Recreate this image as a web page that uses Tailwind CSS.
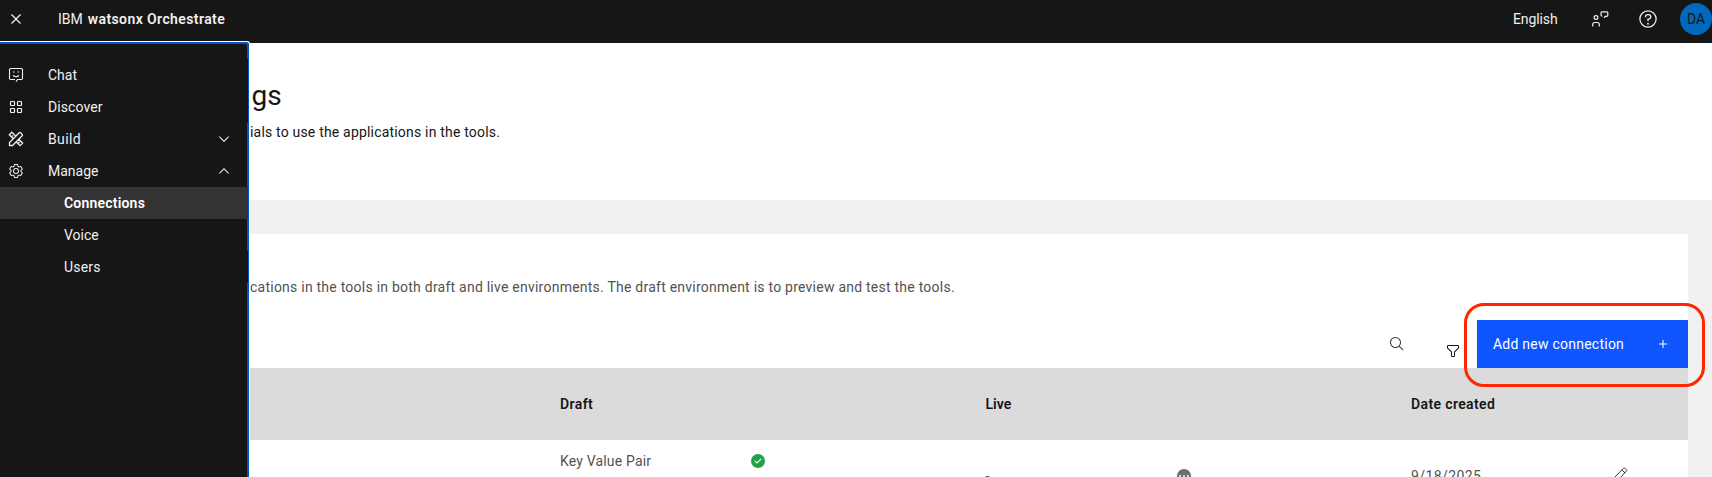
<!DOCTYPE html>
<html lang="en">
<head>
<meta charset="utf-8">
<title>IBM watsonx Orchestrate</title>
<script src="https://cdn.jsdelivr.net/npm/@tailwindcss/browser@4"></script>
</head>
<body class="relative h-[477px] w-[1712px] overflow-hidden bg-white font-['Roboto','Liberation_Sans',sans-serif] text-sm text-[#161616]">
<header class="flex h-[43px] items-center bg-[#161616] pb-[5px] text-[#f0f0f0]">
  <svg class="ml-[6px] size-5" viewBox="0 0 32 32" fill="currentColor"><path d="M17.4141 16 24 9.4141 22.5859 8 16 14.5859 9.4143 8 8 9.4141 14.5859 16 8 22.5859 9.4143 24 16 17.4141 22.5859 24 24 22.5859z"/></svg>
  <div class="ml-8 flex gap-[5px] whitespace-nowrap"><span>IBM</span><b class="font-semibold tracking-[0.4px]">watsonx Orchestrate</b></div>
  <div class="ml-auto flex items-center">
    <span class="w-[44px] tracking-[-0.1px] whitespace-nowrap">English</span>
    <svg class="ml-[33px] size-5" viewBox="0 0 20 20" fill="none" stroke="currentColor" stroke-width="1.2"><circle cx="6" cy="8.500" r="1.900"/><path d="M2.700 17.500v-2a2 2 0 0 1 2-2h2.600a2 2 0 0 1 2 2v2M12.200 7.500 11 6V3.900q0-1 1-1h4.800q1 0 1 1v2.400q0 1-1 1h-1.600L14 9"/></svg>
    <svg class="ml-[28px] size-5" viewBox="0 0 32 32" fill="currentColor"><path d="M16 2a14 14 0 1 0 14 14A14 14 0 0 0 16 2Zm0 26a12 12 0 1 1 12-12 12 12 0 0 1-12 12Z"/><circle cx="16" cy="23.500" r="1.500"/><path d="M17 8h-1.500A4.490 4.490 0 0 0 11 12.500V13h2v-.5A2.500 2.500 0 0 1 15.500 10H17a2.500 2.500 0 0 1 0 5h-2v4.500h2V17a4.500 4.500 0 0 0 0-9Z"/></svg>
    <div class="ml-[22px] flex size-8 items-center justify-center rounded-full bg-[#0068bd] text-[#161616]">DA</div>
  </div>
</header>

<main class="bg-[#f1f1f1]">
  <section class="h-[157px] bg-white pl-[236px]">
    <h1 class="pt-[35px] text-[28px] leading-9">ngs</h1>
    <p class="pt-[9px] pl-[14px] leading-[18px] tracking-[0.19px]">ials to use the applications in the tools.</p>
  </section>
  <section class="mt-[34px] mr-6 h-[243px] bg-white">
    <p class="h-[86px] pt-[44px] pl-[250px] leading-[18px] tracking-[0.237px] text-[#525252]">cations in the tools in both draft and live environments. The draft environment is to preview and test the tools.</p>
    <div class="flex h-12 items-center justify-end">
      <svg class="size-4" viewBox="0 0 32 32" fill="#393939"><path d="M29 27.586l-7.552-7.552a11.018 11.018 0 1 0-1.414 1.414L27.586 29ZM4 13a9 9 0 1 1 9 9 9.010 9.010 0 0 1-9-9Z"/></svg>
      <svg class="mt-[14px] mr-4 ml-[40px] size-4" viewBox="0 0 32 32" fill="#161616"><path d="M18 28h-4a2 2 0 0 1-2-2v-7.590L4.590 11A2 2 0 0 1 4 9.590V6a2 2 0 0 1 2-2h20a2 2 0 0 1 2 2v3.590a2 2 0 0 1-.59 1.410L20 18.410V26a2 2 0 0 1-2 2ZM6 6v3.590l8 8V26h4v-8.410l8-8V6Z"/></svg>
      <button class="flex h-12 w-[211px] items-center justify-between bg-[#0f56ff] pr-[17px] pl-4 tracking-[0.24px] whitespace-nowrap text-white"><span>Add new connection</span><svg class="size-4" viewBox="0 0 32 32" fill="currentColor"><path d="M17 15V8h-2v7H8v2h7v7h2v-7h7v-2z"/></svg></button>
    </div>
    <div class="ml-[250px] grid h-[72px] grid-cols-[310px_425.500px_425.500px_277px] items-center bg-[#dbdbdb] font-semibold"><i></i><span class="tracking-[0.4px]">Draft</span><span>Live</span><span class="tracking-[0.37px]">Date created</span></div>
    <div class="ml-[250px] grid grid-cols-[310px_425.500px_425.500px_277px] text-[#525252]">
      <i></i>
      <div class="flex gap-[100px] pt-[11px]"><span class="w-[90px] leading-5 tracking-[0.17px] whitespace-nowrap">Key Value Pair</span><svg class="mt-[2px] size-4" viewBox="0 0 32 32"><circle cx="16" cy="16" r="14" fill="#24a148"/><path fill="#fff" d="M14 21.590l-5-5L10.590 15 14 18.409 21.410 11l1.596 1.586Z"/></svg></div>
      <div class="flex gap-[185px] pt-[26px]"><span class="w-[5px]">-</span><svg class="mt-[2px] size-4" viewBox="0 0 32 32"><circle cx="16" cy="16" r="14" fill="#6f6f6f"/><g fill="#fff"><circle cx="8" cy="16" r="2"/><circle cx="16" cy="16" r="2"/><circle cx="24" cy="16" r="2"/></g></svg></div>
      <div class="flex gap-[133px] pt-[26px]"><span class="w-[69px] tracking-[0.4px]">9/18/2025</span><svg class="size-4" viewBox="0 0 16 16" fill="none" stroke="#393939"><path d="M1.500 14.500V11.500L10.500 2.200a1 1 0 0 1 1.400 0l1.500 1.500a1 1 0 0 1 0 1.400L4.500 14.500ZM9 4l3 3"/></svg></div>
    </div>
  </section>
</main>

<nav class="absolute top-[41px] left-0 h-[440px] w-[250px] rounded-tr-[3px] border-t border-r border-white bg-[#0353c8] pt-[2px] text-[#f0f0f0]">
  <div class="h-full w-[247px] rounded-tr-[2px] bg-[#161616] pt-[15px]">
    <div class="flex h-8 w-[248px] items-center bg-[#161616] pl-2"><svg class="mr-6 size-4" viewBox="0 0 16 16" fill="none" stroke="currentColor" stroke-width="1.100"><path d="M8 14.700l1.400-2.200H13.300a1.200 1.200 0 0 0 1.200-1.200V2.700A1.200 1.200 0 0 0 13.300 1.500H2.700A1.200 1.200 0 0 0 1.500 2.700v8.600a1.200 1.200 0 0 0 1.200 1.200H7M5 5h1.500M9.500 5H11M5 8.500q3 2.600 6 0"/></svg>Chat</div>
    <div class="flex h-8 w-[248px] items-center bg-[#161616] pl-2"><svg class="mr-6 size-4" viewBox="0 0 16 16" fill="none" stroke="currentColor" stroke-width="1.200"><rect x="2.500" y="2.500" width="4" height="4" rx=".7"/><rect x="9.500" y="2.500" width="4" height="4" rx=".7"/><rect x="2.500" y="9.500" width="4" height="4" rx=".7"/><rect x="9.500" y="9.500" width="4" height="4" rx=".7"/></svg><span class="tracking-[0.1px]">Discover</span></div>
    <div class="flex h-8 items-center pl-2"><svg class="mr-6 size-4" viewBox="0 0 16 16" fill="none" stroke="currentColor" stroke-width="1.300"><path d="M5.500 8 1.300 3.800 3.900 1.200 8 5.400M10.300 7.800l4.300 4.300-2.600 2.600L7.800 10.500M3.600 5.800 5 4.400M10.300 12.200l1.400-1.400M1.500 14.500V11.500L11.200 1.800a1 1 0 0 1 1.400 0L14.200 3.400a1 1 0 0 1 0 1.400L4.500 14.500Z"/></svg><span class="tracking-[0.4px]">Build</span><svg class="mr-[15px] ml-auto size-4" viewBox="0 0 16 16" fill="currentColor"><path d="M8 11 3 6l.7-.7L8 9.600l4.300-4.300.7.7z"/></svg></div>
    <div class="flex h-8 items-center pl-2"><svg class="mr-6 size-4" viewBox="0 0 32 32" fill="currentColor"><path d="M27,16.76c0-.25,0-.5,0-.76s0-.51,0-.77l1.92-1.68A2,2,0,0,0,29.3,11L26.94,7a2,2,0,0,0-1.73-1,2,2,0,0,0-.64.1l-2.43.82a11.35,11.35,0,0,0-1.31-.75l-.51-2.52a2,2,0,0,0-2-1.61H13.64a2,2,0,0,0-2,1.61l-.51,2.52a11.48,11.48,0,0,0-1.32.75L7.43,6.06A2,2,0,0,0,6.79,6,2,2,0,0,0,5.06,7L2.7,11a2,2,0,0,0,.41,2.51L5,15.24c0,.25,0,.5,0,.76s0,.51,0,.77L3.11,18.45A2,2,0,0,0,2.7,21L5.06,25a2,2,0,0,0,1.73,1,2,2,0,0,0,.64-.1l2.43-.82a11.35,11.35,0,0,0,1.31.75l.51,2.52a2,2,0,0,0,2,1.61h4.72a2,2,0,0,0,2-1.61l.51-2.52a11.48,11.48,0,0,0,1.32-.75l2.42.82a2,2,0,0,0,.64.1,2,2,0,0,0,1.73-1L29.3,21a2,2,0,0,0-.41-2.51ZM25.21,24l-3.43-1.16a8.86,8.86,0,0,1-2.71,1.57L18.36,28H13.64l-.71-3.55a9.36,9.36,0,0,1-2.7-1.57L6.79,24,4.43,20l2.72-2.4a8.9,8.9,0,0,1,0-3.13L4.43,12,6.79,8l3.43,1.16a8.86,8.86,0,0,1,2.71-1.57L13.64,4h4.72l.71,3.55a9.36,9.36,0,0,1,2.7,1.57L25.21,8,27.57,12l-2.72,2.4a8.9,8.9,0,0,1,0,3.13L27.57,20Z"/><path d="M16,22a6,6,0,1,1,6-6A5.94,5.94,0,0,1,16,22Zm0-10a3.91,3.91,0,0,0-4,4,3.91,3.91,0,0,0,4,4,3.91,3.91,0,0,0,4-4A3.91,3.91,0,0,0,16,12Z"/></svg>Manage<svg class="mr-[15px] ml-auto size-4" viewBox="0 0 16 16" fill="currentColor"><path d="M8 5l5 5-.7.7L8 6.400l-4.300 4.300L3 10z"/></svg></div>
    <div class="flex h-8 w-[248px] items-center bg-[#333] pl-16 font-semibold tracking-[0.2px] text-white">Connections</div>
    <div class="flex h-8 items-center pl-16">Voice</div>
    <div class="flex h-8 w-[248px] items-center bg-[#161616] pl-16 tracking-[0.2px]">Users</div>
  </div>
</nav>

<div class="absolute top-[303px] left-[1464px] h-[84px] w-[241px] rounded-[20px] border-3 border-[#ff2600]"></div>
</body>
</html>
